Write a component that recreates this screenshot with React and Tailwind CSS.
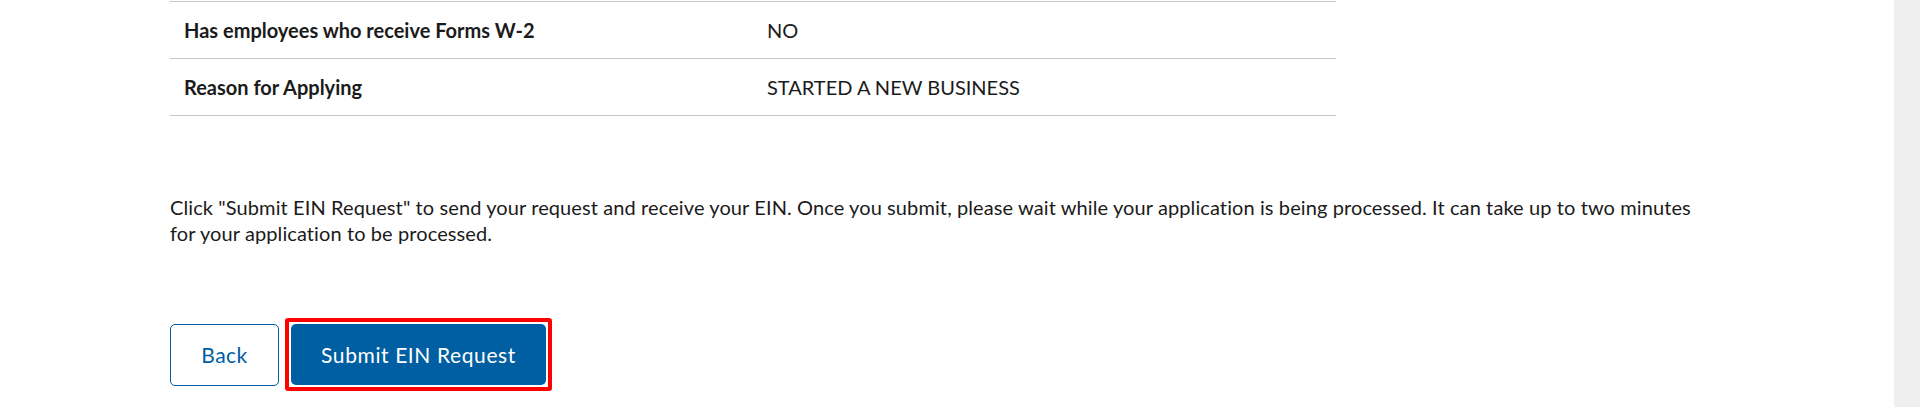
const rows = [
  { label: 'Has employees who receive Forms W-2', value: 'NO' },
  { label: 'Reason for Applying', value: 'STARTED A NEW BUSINESS' },
];

export default function App() {
  return (
    <div className="flex h-[407px] w-full bg-white text-[#1b1b1b]" style={{ fontFamily: 'Lato, "Open Sans", sans-serif' }}>
      <main className="flex-1 pl-[170px] pt-px">
        {/* review table */}
        <div className="w-[1166px] border-b border-[#c6c6c6]">
          {rows.map((r) => (
            <div key={r.label} className="grid grid-cols-[581px_1fr] h-[57px] items-center border-t border-[#c6c6c6] text-[20px]">
              <div className="pl-[14px] font-bold">{r.label}</div>
              <div className="pl-[16px]">{r.value}</div>
            </div>
          ))}
        </div>

        <p className="mt-[78px] max-w-[1528px] text-[20px] leading-[26px] tracking-[0.1px]">
          Click "Submit EIN Request" to send your request and receive your EIN. Once you submit, please wait while your application is being processed. It can take up to two minutes for your application to be processed.
        </p>

        <div className="mt-[72px] flex items-center gap-[6px]">
          <button type="button" className="h-[62px] w-[109px] rounded-[5px] border border-[#005ea2] bg-white text-[21px] tracking-[0.5px] text-[#005ea2]">
            Back
          </button>
          <span className="rounded-[3px] border-[4px] border-[#ff0000] p-[2px]">
            <button type="button" className="block h-[61px] w-[255px] rounded-[5px] bg-[#005ea2] text-[21px] tracking-[0.6px] text-white">
              Submit EIN Request
            </button>
          </span>
        </div>
      </main>
      <div className="w-[26px] shrink-0 bg-[#efefef]" />
    </div>
  );
}
